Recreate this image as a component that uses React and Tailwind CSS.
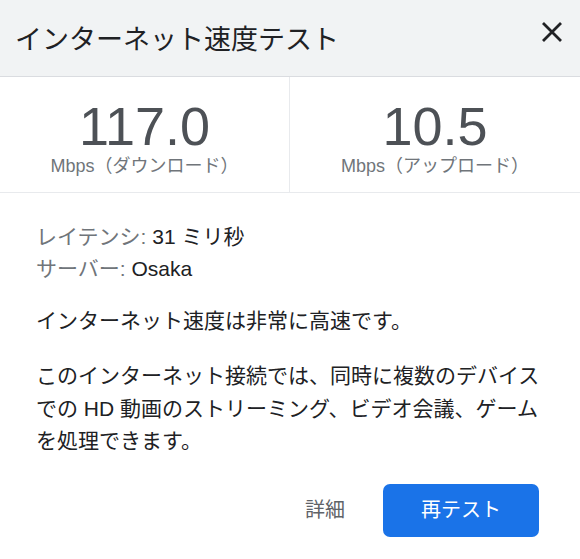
import React from "react";

const font = { fontFamily: '"Liberation Sans", "Noto Sans CJK JP", sans-serif' };

export default function App() {
  return (
    <div className="w-[580px] h-[559px] bg-white overflow-hidden" style={font}>
      <div className="h-[77px] bg-[#f1f3f4] border-b border-[#dadce0] flex items-start justify-between pl-[15px] pr-[17px]">
        <div className="text-[27px] leading-[36px] text-[#202124] mt-[22px]">インターネット速度テスト</div>
        <svg width="22" height="22" viewBox="0 0 22 22" className="mt-[21px]">
          <path d="M2 2 L20 20 M20 2 L2 20" stroke="#202124" strokeWidth="2.8" fill="none" />
        </svg>
      </div>
      <div className="grid grid-cols-2 h-[116px] border-b border-[#e8eaed]">
        <div className="border-r border-[#e8eaed] flex flex-col items-center pt-[24px]">
          <div className="text-[54px] leading-[50px] text-[#4d5156]">117.0</div>
          <div className="text-[18px] leading-[24px] text-[#70757a] mt-[3px]">Mbps（ダウンロード）</div>
        </div>
        <div className="flex flex-col items-center pt-[24px]">
          <div className="text-[54px] leading-[50px] text-[#4d5156]">10.5</div>
          <div className="text-[18px] leading-[24px] text-[#70757a] mt-[3px]">Mbps（アップロード）</div>
        </div>
      </div>
      <div className="pl-[36px] pt-[28px] text-[21px]">
        <div className="leading-[32px]">
          <span className="text-[#70757a]">レイテンシ: </span>
          <span className="text-[#202124]">31 ミリ秒</span>
        </div>
        <div className="leading-[32px]">
          <span className="text-[#70757a]">サーバー: </span>
          <span className="text-[#202124]">Osaka</span>
        </div>
        <div className="leading-[32px] mt-[20px] text-[#202124]">インターネット速度は非常に高速です。</div>
        <div className="leading-[32.5px] mt-[23px] text-[#202124] w-[512px]">
          このインターネット接続では、同時に複数のデバイスでの HD 動画のストリーミング、ビデオ会議、ゲームを処理できます。
        </div>
        <div className="flex items-center justify-end gap-[38px] pr-[41px] mt-[26px]">
          <button className="text-[20px] leading-[28px] text-[#5f6368]">詳細</button>
          <button className="w-[156px] h-[53px] rounded-[7px] bg-[#1a73e8] text-white text-[20px] leading-[28px]">再テスト</button>
        </div>
      </div>
    </div>
  );
}
